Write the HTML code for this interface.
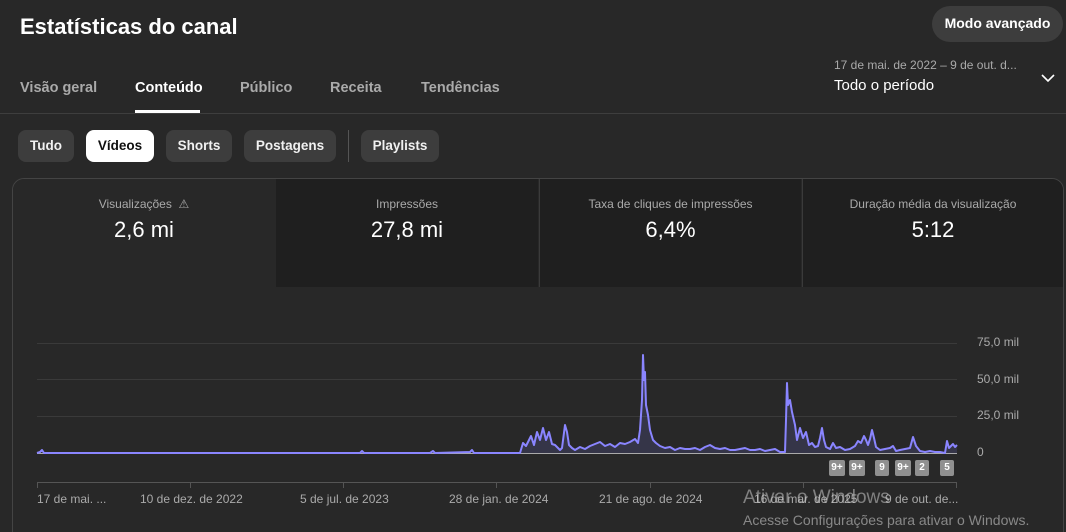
<!DOCTYPE html>
<html><head><meta charset="utf-8">
<style>
*{margin:0;padding:0;box-sizing:border-box}
html,body{width:1066px;height:532px;overflow:hidden}
body{background:#282828;font-family:"Liberation Sans",sans-serif;color:#fff;position:relative}
.a{position:absolute;white-space:nowrap}
.tab{font-size:14.5px;font-weight:bold;color:#aaa;top:80px}
.chip{top:130px;height:32px;border-radius:8px;background:#3d3d3d;font-size:13.5px;font-weight:bold;line-height:32px;text-align:center;color:#f1f1f1}
.mt{top:179px;height:108px;background:#1f1f1f;text-align:center}
.mt .l{font-size:12px;color:#aaa;margin-top:18px}
.mt .v{font-size:22px;color:#fff;margin-top:6px}
.yl{font-size:12px;color:#aaa;left:977px}
.xl{font-size:12px;color:#aaa;top:492px}
.bd{top:460px;height:16px;background:#909090;border-radius:2px;font-size:10px;font-weight:bold;color:#fff;text-align:center;line-height:16px}
</style></head><body>
<div class="a" style="left:20px;top:14px;font-size:22px;font-weight:bold">Estatísticas do canal</div>
<div class="a" style="left:932px;top:6px;width:131px;height:36px;border-radius:18px;background:#3d3d3d;font-size:14px;font-weight:bold;line-height:34px;text-align:center">Modo avançado</div>
<div class="a" style="left:834px;top:58px;font-size:12px;color:#aaa">17 de mai. de 2022 – 9 de out. d...</div>
<div class="a" style="left:834px;top:77px;font-size:15px">Todo o período</div>
<svg class="a" style="left:1040px;top:72px" width="16" height="12"><path d="M2 3l6 6 6-6" stroke="#fff" stroke-width="1.6" fill="none"/></svg>
<div class="a tab" style="left:20px">Visão geral</div>
<div class="a tab" style="left:135px;color:#fff">Conteúdo</div>
<div class="a" style="left:135px;top:110px;width:65px;height:3px;background:#fff"></div>
<div class="a tab" style="left:240px">Público</div>
<div class="a tab" style="left:330px">Receita</div>
<div class="a tab" style="left:421px">Tendências</div>
<div class="a" style="left:0;top:113px;width:1066px;height:1px;background:#3e3e3e"></div>
<div class="a chip" style="left:18px;width:56px">Tudo</div>
<div class="a chip" style="left:86px;width:68px;background:#fff;color:#0f0f0f">Vídeos</div>
<div class="a chip" style="left:166px;width:66px">Shorts</div>
<div class="a chip" style="left:244px;width:92px">Postagens</div>
<div class="a" style="left:348px;top:130px;width:1px;height:32px;background:#555"></div>
<div class="a chip" style="left:361px;width:78px">Playlists</div>
<div class="a" style="left:12px;top:178px;width:1052px;height:370px;border:1px solid #444;border-radius:12px;background:#282828"></div>
<div class="a mt" style="left:13px;width:262px;background:#282828;border-top-left-radius:11px"><div class="l">Visualizações &nbsp;⚠</div><div class="v">2,6 mi</div></div>
<div class="a mt" style="left:276px;width:262px"><div class="l">Impressões</div><div class="v">27,8 mi</div></div>
<div class="a mt" style="left:539px;width:262px;border-left:1px solid #3a3a3a"><div class="l">Taxa de cliques de impressões</div><div class="v">6,4%</div></div>
<div class="a mt" style="left:802px;width:261px;border-left:1px solid #3a3a3a;border-top-right-radius:11px"><div class="l">Duração média da visualização</div><div class="v">5:12</div></div>
<svg class="a" style="left:0;top:0" width="1066" height="532">
<g stroke="#3a3a3a" stroke-width="1"><line x1="37" y1="343.5" x2="957" y2="343.5"/><line x1="37" y1="379.5" x2="957" y2="379.5"/><line x1="37" y1="416.5" x2="957" y2="416.5"/></g>
<line x1="37" y1="453.5" x2="957" y2="453.5" stroke="#aaa"/>
<g stroke="#555"><line x1="37" y1="482.5" x2="957" y2="482.5"/><path d="M37.5 482v6M190.5 482v6M343.5 482v6M496.5 482v6M650.5 482v6M803.5 482v6M956.5 482v6"/></g>
<polyline fill="rgba(130,130,255,0.15)" stroke="none" points="520,453 523,443 526,446 529,440 531,436 534,445 537,432 540,440 543,428 546,440 549,432 552,444 555,445 558,448 560,450 562,448 565,425 567,432 569,445 572,448 575,450 580,447 585,449 590,446 595,444 600,442 605,446 610,444 615,447 620,443 625,444 630,442 635,439 638,443 640,430 642,400 643,355 644,380 645,372 646,405 648,415 650,430 653,440 656,443 660,446 665,448 670,447 675,450 680,448 685,449 690,449 695,448 700,450 705,447 710,445 715,448 720,449 725,448 730,450 735,450 740,449 745,448 750,450 755,450 760,449 765,451 770,450 775,449 780,452 785,452 786,420 787,383 788,405 790,400 792,412 795,425 797,440 800,428 803,438 806,432 809,445 812,443 815,447 818,446 820,438 822,428 824,440 826,447 830,449 833,443 836,448 840,447 845,450 850,449 855,446 858,441 861,443 864,436 866,440 868,445 870,439 872,430 874,438 876,447 880,450 885,449 890,448 893,446 896,451 900,450 905,449 910,448 913,437 916,446 920,451 925,452 930,451 935,452 940,452 945,453 947,441 949,448 951,446 953,444 955,447 957,445 957,453"/>
<polyline fill="none" stroke="#8a85ff" stroke-width="2" stroke-linejoin="round" points="37,453 40,452 42,450 44,453 360,453 362,451 364,453 430,453 433,451 435,453 470,452 472,450 474,453 500,453 520,453 523,443 526,446 529,440 531,436 534,445 537,432 540,440 543,428 546,440 549,432 552,444 555,445 558,448 560,450 562,448 565,425 567,432 569,445 572,448 575,450 580,447 585,449 590,446 595,444 600,442 605,446 610,444 615,447 620,443 625,444 630,442 635,439 638,443 640,430 642,400 643,355 644,380 645,372 646,405 648,415 650,430 653,440 656,443 660,446 665,448 670,447 675,450 680,448 685,449 690,449 695,448 700,450 705,447 710,445 715,448 720,449 725,448 730,450 735,450 740,449 745,448 750,450 755,450 760,449 765,451 770,450 775,449 780,452 785,452 786,420 787,383 788,405 790,400 792,412 795,425 797,440 800,428 803,438 806,432 809,445 812,443 815,447 818,446 820,438 822,428 824,440 826,447 830,449 833,443 836,448 840,447 845,450 850,449 855,446 858,441 861,443 864,436 866,440 868,445 870,439 872,430 874,438 876,447 880,450 885,449 890,448 893,446 896,451 900,450 905,449 910,448 913,437 916,446 920,451 925,452 930,451 935,452 940,452 945,453 947,441 949,448 951,446 953,444 955,447 957,445"/>
</svg>
<div class="a yl" style="top:335px">75,0 mil</div>
<div class="a yl" style="top:372px">50,0 mil</div>
<div class="a yl" style="top:408px">25,0 mil</div>
<div class="a yl" style="top:445px">0</div>
<div class="a bd" style="left:829px;width:16px">9+</div>
<div class="a bd" style="left:849px;width:16px">9+</div>
<div class="a bd" style="left:875px;width:14px">9</div>
<div class="a bd" style="left:895px;width:16px">9+</div>
<div class="a bd" style="left:915px;width:14px">2</div>
<div class="a bd" style="left:940px;width:14px">5</div>
<div class="a xl" style="left:37px">17 de mai. ...</div>
<div class="a xl" style="left:140px">10 de dez. de 2022</div>
<div class="a xl" style="left:300px">5 de jul. de 2023</div>
<div class="a xl" style="left:449px">28 de jan. de 2024</div>
<div class="a xl" style="left:599px">21 de ago. de 2024</div>
<div class="a xl" style="left:754px">16 de mar. de 2025</div>
<div class="a xl" style="left:885px">9 de out. de...</div>
<div class="a" style="left:743px;top:487px;font-size:19px;color:rgba(200,200,200,0.55)">Ativar o Windows</div>
<div class="a" style="left:743px;top:512px;font-size:14px;color:rgba(200,200,200,0.6)">Acesse Configurações para ativar o Windows.</div>
</body></html>
